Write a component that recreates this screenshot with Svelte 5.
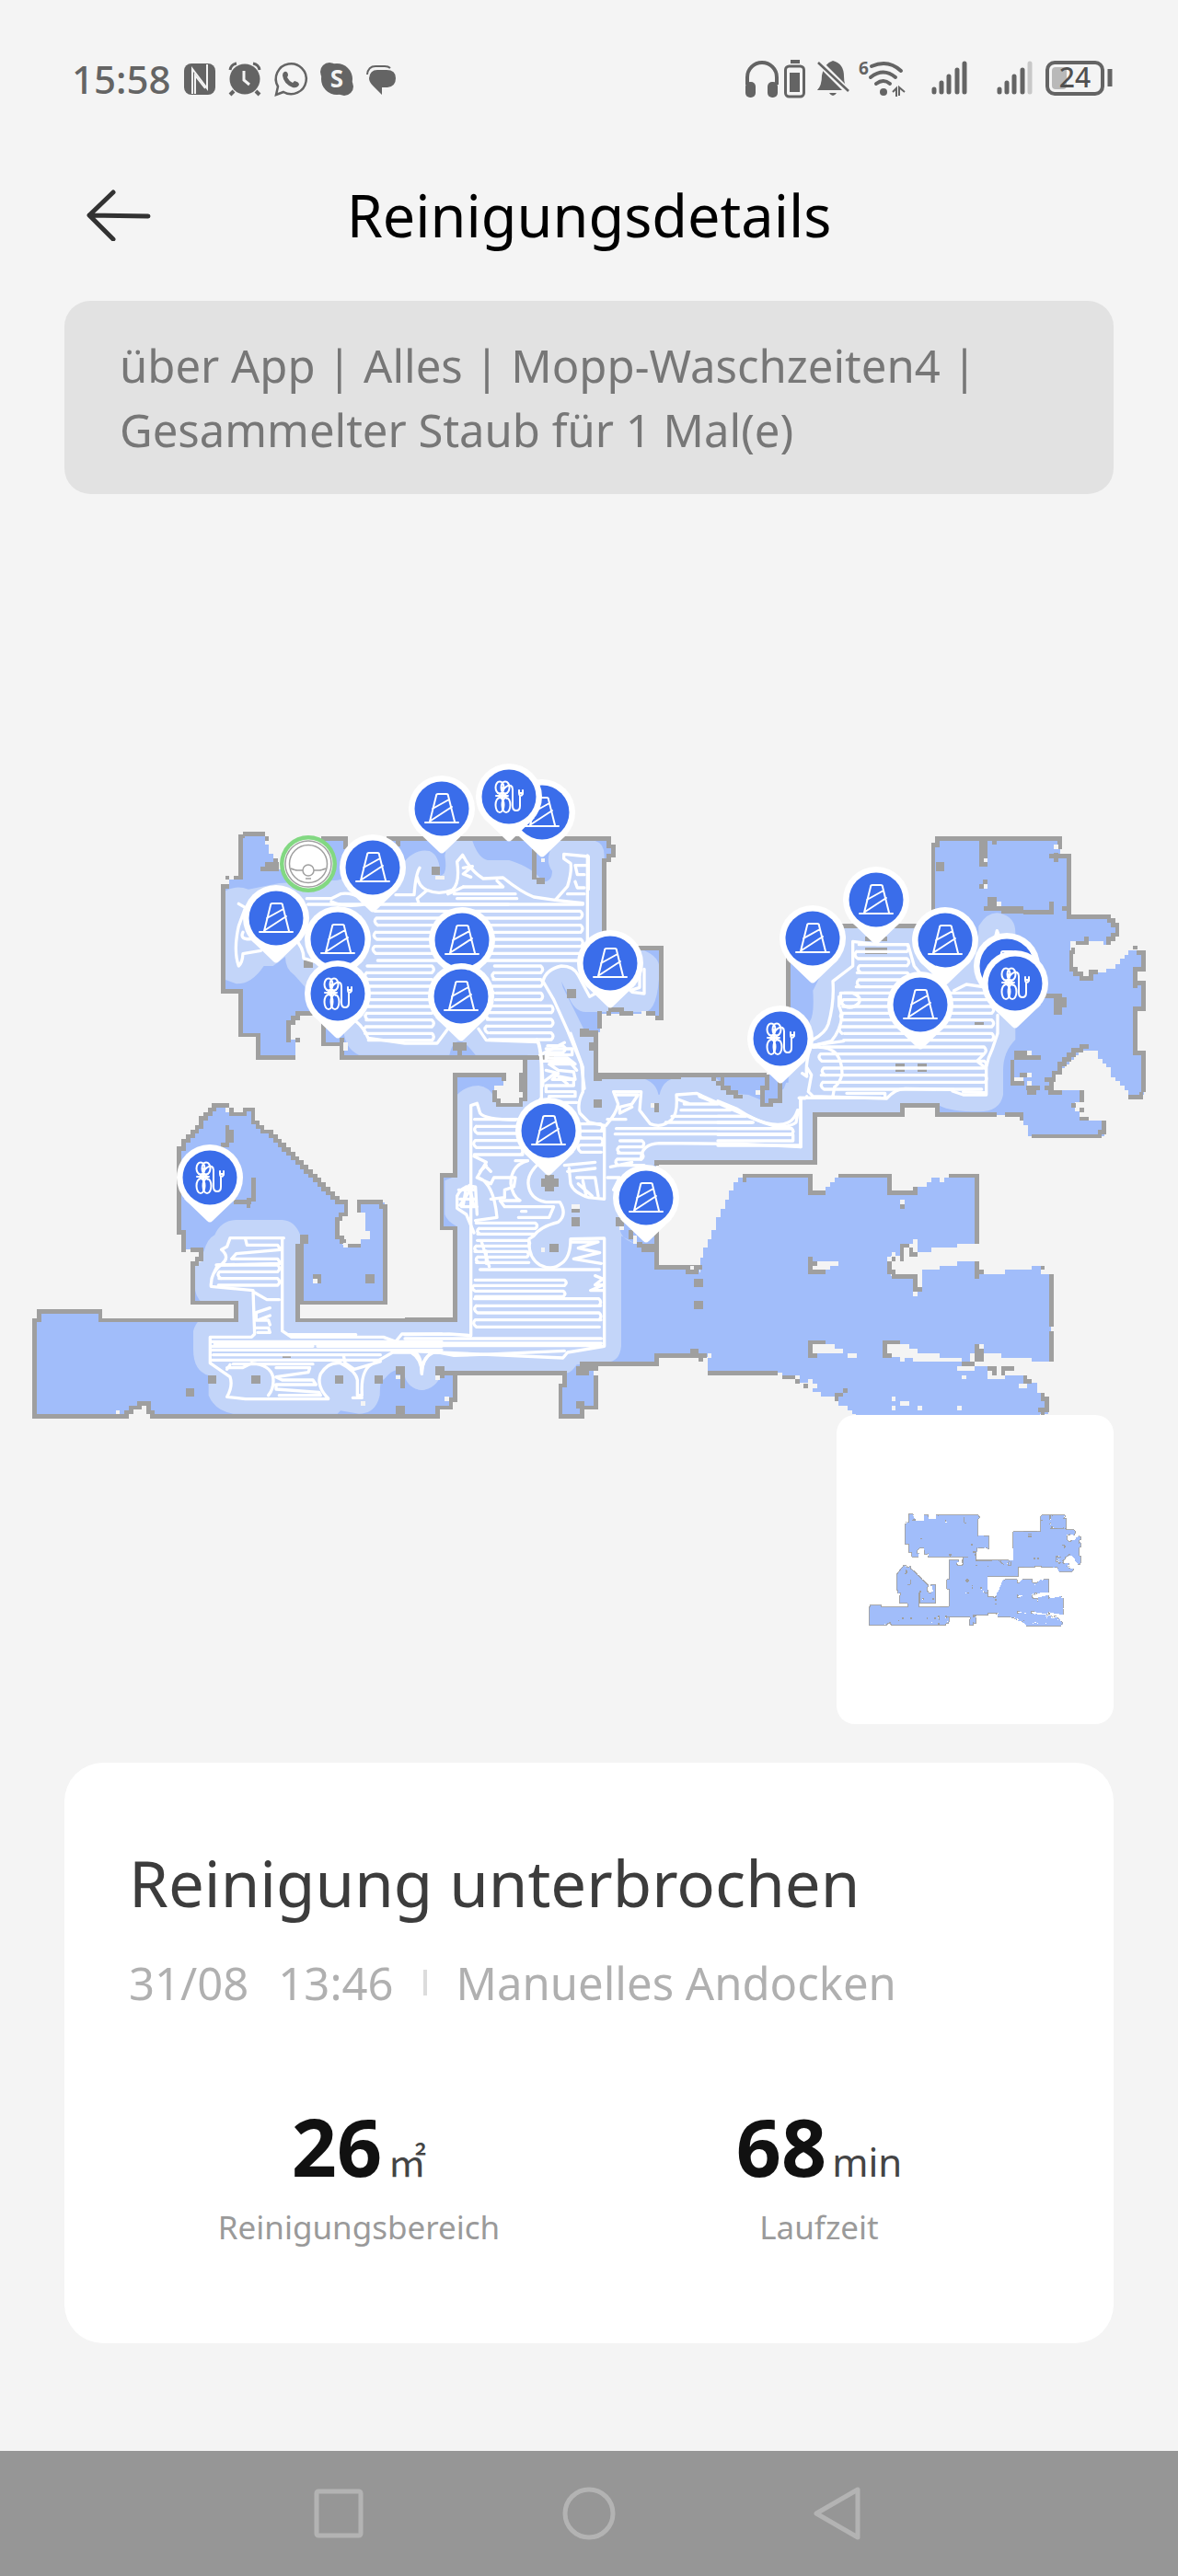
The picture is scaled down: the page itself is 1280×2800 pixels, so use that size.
<script lang="ts">
  type Pin = { x: number; y: number; kind: 'cone' | 'cable' };
  type Box = [number, number, number, number];
  type Room = {
    name: string;
    at: [number, number];
    floor: string;
    cleaned?: string;
    walls: string;
    blocks: Box[];
    gaps: Box[];
    trail?: string[];
  };

  // ----- rows of the cleaning path, joined alternately left and right -----
  function rows(left: number, right: number, top: number, bottom: number, step = 23) {
    let d = '';
    let side = false;
    for (let y = top; y <= bottom; y += step) {
      const l = left + ((y * 7) % 13);
      const r = right - ((y * 5) % 11);
      d += `M${l} ${y}H${r}`;
      if (y + step <= bottom) d += side ? `M${l} ${y}q-12 ${step / 2} 4 ${step}` : `q12 ${step / 2} 0 ${step}`;
      side = !side;
    }
    return d;
  }

  // every room is drawn three units to the pixel, from its own origin
  const rooms: Room[] = [
    {
      name: 'north-west',
      at: [220, 820],
      floor:
        'M125 402V267H138V260H204V295H215V325H230V345H245V375H390V275H467V340H600V275H1325V295H1340V335H1325V345H1310V632H1495V860H1475V845H1295V905H1282V1100H1052V988H455V945H395V845H310V860H295V875H280V930H303V988H182V915H125V772H68V430H88V408H125Z',
      cleaned:
        'M75 445Q110 425 150 440L250 420L440 410L650 360Q690 305 740 315Q775 330 775 395Q800 395 790 330L800 282H880Q900 340 930 345H1000Q1080 370 1110 415Q1140 415 1140 380Q1115 345 1140 300L1150 282H1280Q1310 290 1310 330V640H1440Q1490 660 1490 700Q1485 840 1440 840H1250Q1210 840 1190 780L1170 740L1175 760L1245 900H1275V1100H1060V980H890Q850 930 838 935Q815 935 805 980H510Q465 960 460 900L300 720Q270 700 270 660L230 690H200Q160 750 110 748L75 735Z',
      walls:
        'M88 430H68V772H125V915H182V988H303M75 402H88M103 402H125V267H138M132 260H203M210 267V281M190 373H250M205 358H250M238 340V370M388 275H467V310M600 275H1325V300H1340V330H1325V350M1310 340V640M638 282V300M1420 632H1495V860H1475M1317 845H1331M1322 832H1374M1360 845H1405M1447 845H1475M1295 838V895M1282 915V1052H1560M390 845H310V860H295V875H280V938M303 932H318M395 875V945H455M455 925V988H1145M1052 995V1045M1040 1038V1100M1082 310V408',
      blocks: [
        [747, 366, 28, 28], [1090, 402, 25, 20], [330, 672, 30, 24], [1188, 765, 30, 30], [816, 938, 45, 28],
        [831, 960, 14, 28], [1230, 895, 30, 15], [1245, 910, 45, 12], [1260, 938, 30, 28]
      ],
      gaps: [[760, 396, 28, 12], [1103, 338, 12, 12], [458, 938, 16, 28], [1331, 845, 14, 8], [1431, 838, 14, 14]],
      trail: [
        rows(560, 1235, 511, 680),
        rows(340, 1000, 489, 500),
        rows(530, 755, 690, 940, 22),
        rows(945, 1110, 690, 800, 22),
        rows(925, 1145, 820, 940, 22),
        'M680 489H1240M1255 330V690M820 455H1020M830 470H1025M850 432H980L960 412',
        'M118 487L140 500L118 560Q100 640 118 690Q130 680 132 650L190 640M132 580Q120 605 160 602M300 600Q330 630 330 665L380 680',
        'M340 470H420L450 455Q480 448 520 470M420 480Q460 500 520 490M630 458H690Q695 390 708 370M700 400Q705 430 730 442Q770 460 815 442Q840 420 830 350L848 328Q875 380 915 405L980 402Q1040 450 1080 465L1150 475L1190 430Q1205 380 1200 355L1178 340V325L1258 333V440',
        'M730 445L700 470L705 485M850 370L880 365L850 390L875 400M1150 475L1240 485M1215 362H1250M1215 362L1222 392H1245M1215 415L1222 435H1245M1190 455H1245M800 455L850 432',
        'M500 870Q525 890 540 925L660 942H765L800 895M900 895L925 932L1095 938Q1105 960 1110 1080',
        'M1110 740Q1120 700 1170 690Q1210 690 1225 720L1262 790L1290 775M1110 740L1145 800L1190 900L1235 1010L1245 1090M1440 700V780L1400 775M1425 710V760L1395 770',
        'M1125 950H1175Q1190 960 1175 972H1125V990H1190L1215 1010H1130L1160 1030L1210 1035L1215 1060L1160 1050L1190 1075M1115 1065L1150 1040'
      ]
    },
    {
      name: 'north-east',
      at: [780, 890],
      floor:
        'M703 85H715V64H1115V120H1145V320H1275V332H1288V347H1302V378H1288V392H1273V412H1258V400H1150V435H1145V490H1160V505H1180V520H1225V500H1265V488H1295V473H1310V455H1325V443H1338V430H1388V492H1360V535H1388V620H1360V765H1388V900H1338V885H1325V870H1310V855H1295V842H1280V810H1265V797H1253V783H1240V755H1175V770H1160V785H1145V800H1130V812H1115V828H1100V842H1088V885H1180V925H1165V955H1180V985H1260V1035H1010V1000H995V965H715V935H602V965H317V1120H-200V835H160V870H145V935H180V920H203V860H230V350H703Z',
      cleaned:
        'M410 355H645L760 480Q850 500 850 350Q880 300 920 308Q970 320 970 370V720Q930 760 930 820V900Q920 955 850 955Q760 955 722 935V965H317V1120H-200V900Q0 890 100 900L160 925L215 880L300 660Q315 640 310 560L325 530Z',
      walls:
        'M203 925V850M230 640V350H702V85H715V64H1115V98M1080 121H1145V320H1275V332H1288V347H1302V378H1288V392H1273V412M1102 110V140M1168 405H1202V385M1158 420V435H1152V490H1165V505H1185V520H1217V500H1238M1360 415V427M1365 436H1388V490H1360V552M1367 535H1388V620H1360V764H1388V892M1338 907H1380V890M1208 742H1185V755H1160V770H1145V785H1130V800H1115V828H1095V850H1065M1088 850V885M965 764H1008M965 778H1052M960 785V862H1000M985 835H1007M1005 878H1050M1008 892H1038M1065 878H1085V892H1122M1187 885V925M1152 935H1166M1178 978H1208M1258 985V1021H1245V1035H1023M990 985V965H935M908 965H715V935H602V965H317V1120M995 305H1088V270M410 350H640',
      blocks: [
        [852, 70, 27, 85], [893, 70, 16, 14], [710, 142, 28, 28], [865, 198, 14, 14], [852, 213, 14, 14],
        [878, 255, 30, 30], [867, 285, 58, 14], [923, 285, 72, 25], [1122, 285, 20, 14], [1065, 570, 57, 14],
        [1095, 583, 41, 31], [1095, 610, 27, 30], [837, 662, 30, 10], [580, 798, 28, 28], [650, 798, 30, 28],
        [480, 385, 72, 13], [480, 420, 72, 22], [1178, 942, 16, 14]
      ],
      gaps: [
        [867, 128, 12, 14], [867, 213, 12, 14], [908, 270, 16, 15], [1095, 85, 14, 14], [1008, 757, 14, 14],
        [1008, 828, 14, 14], [1008, 855, 14, 14], [967, 843, 28, 12], [1195, 920, 14, 40]
      ],
      trail: [
        rows(450, 620, 410, 548),
        rows(400, 895, 568, 730, 22),
        rows(335, 870, 744, 885),
        'M440 400L520 410H620L640 480L665 510M440 400V480L375 530Q380 600 360 670Q350 700 310 720M395 580V610L405 640Q400 690 370 725L310 740M770 560L810 540L880 550M905 385L910 365L918 385',
        'M310 745Q360 740 385 765Q405 790 405 830Q400 860 380 875L375 905M300 750Q285 800 290 840L275 830M290 810L305 835L295 890L310 905L550 912Q580 880 610 880L770 883M765 888L800 900H875V810Q880 780 895 750L912 700V640',
        'M420 895H545V908M360 910H530M400 568H440Q470 580 460 600Q430 630 400 600L400 570M865 770L845 790L870 810M300 740L410 725',
        'M270 910V1070M262 950L255 990Q230 1010 180 1000Q120 985 60 945L0 920M0 970H90M0 990H110M0 1010H240M0 1030H245V1050H0M0 1065H265',
        'M800 890L870 893M290 905Q290 915 265 910H370'
      ]
    },
    {
      name: 'hall',
      at: [440, 1120],
      floor:
        'M163 145H322V180H292V230H305V243H372V225H392V88H622V145H1340V430H820V772H960V1060H820V1088H575V1110H622V1230H578V1258H507V1165H520V1117H163V1205H150V1230H107V1258H0V943H163V645H120V473H163Z',
      cleaned:
        'M170 210Q200 180 240 180Q275 185 290 215L305 245H372L392 200V95H540L622 160L760 152Q830 165 828 230Q830 155 900 152H1010L1080 210L1170 240H1335V400Q1335 423 1320 423H820L700 640Q700 680 750 695L705 670V1030Q700 1080 660 1082L560 1090Q540 1120 525 1117H100Q90 1170 55 1173Q10 1170 0 1120V950H170V640Q135 620 130 600V490L170 473Z',
      walls:
        'M622 0V152M615 145H1180M392 95V225H378V243H305V228H292V195M380 138V180M322 165V145H163V473H120V645H163V943H0M820 440V430H1337V274H1440M820 650V772H970M915 787H957M570 1087H820V1060H985M622 1125V1230H578V1258H507V1158H520V1117H110M163 1117V1205H150V1230H107V1258H0M1035 145V187H1055V202H1078V216H1102M1000 158H1015M1015 173H1038M1180 145V188H1165V243H1192V230H1222V175',
      blocks: [
        [570, 0, 45, 22], [600, 38, 20, 28], [615, 138, 28, 27], [770, 697, 45, 26], [757, 690, 16, 18],
        [730, 652, 14, 28], [688, 610, 26, 28], [942, 810, 30, 28], [942, 882, 30, 28], [930, 1038, 27, 20],
        [957, 1060, 15, 20], [570, 1090, 60, 20], [558, 1095, 42, 30], [100, 1095, 28, 40], [558, 1208, 27, 25],
        [615, 225, 27, 27], [813, 238, 15, 28], [445, 483, 56, 27], [457, 470, 28, 55], [543, 582, 27, 12],
        [543, 610, 27, 28], [470, 695, 30, 28]
      ],
      gaps: [
        [743, 668, 13, 28], [700, 638, 14, 14], [930, 768, 13, 13], [987, 1053, 13, 14], [800, 238, 13, 14],
        [543, 567, 27, 14], [443, 708, 13, 14], [1143, 195, 14, 14], [100, 1125, 14, 14], [130, 1194, 14, 14],
        [615, 1110, 16, 14]
      ],
      trail: [
        rows(225, 385, 290, 405),
        rows(565, 645, 305, 410),
        rows(230, 430, 628, 665, 18),
        rows(225, 405, 685, 765, 18),
        rows(245, 640, 780, 800),
        rows(225, 520, 814, 870, 18),
        rows(225, 640, 875, 985),
        rows(685, 1265, 320, 350, 18),
        rows(690, 780, 360, 440, 20),
        'M215 245V995L145 990L0 992M215 245L235 238L245 270Q260 290 360 292M650 310V550L600 545Q550 530 540 500L535 450M650 680V1030L530 1050L515 1068L0 1045M640 1005H0M640 1020H0M640 1028H0',
        'M400 425Q345 440 345 500Q350 540 375 555H310L325 575H485L470 610H370M430 440Q400 470 402 500Q405 550 460 560H505Q530 600 500 625Q440 640 420 670L405 680Q400 740 440 765Q480 785 510 760Q540 740 540 680L650 678',
        'M225 410L265 430L235 480L280 500L290 480H360L355 510L325 520V545L280 550M265 440L245 460L260 440L280 460M240 480Q290 500 300 610L230 620M170 540Q190 500 230 510L235 600M170 540V580L200 600L225 660M175 520H230M180 550H230M185 575H235M200 510L190 570M220 510L180 570M210 505L225 575',
        'M400 425H360M520 440L620 430M530 460L620 450M560 480H620L630 540M565 500L610 540M580 490L590 535M250 690L275 770M265 720V760M380 590H395M545 690H630L565 710L635 725L550 745L640 760',
        'M620 800L645 810L620 830H645L605 848H645M430 30Q445 60 445 140V220L430 240M440 80L520 40M450 100H540M540 10L580 120V200Q560 240 570 270L600 300L650 310',
        'M460 60H545V80H460V100L530 95L560 130M460 130L500 140L480 160H550V180H460V200H555V215H470V235H560',
        'M655 310Q690 270 695 240L680 200H770L765 260L800 305Q840 320 870 290Q890 270 885 210L950 205L1060 255L1130 285Q1210 320 1250 300Q1270 290 1280 260M1290 220V380L1100 370L830 368Q770 370 770 420M900 260H1060M870 280H1110M850 300H1135M910 240H1020L960 215M890 225L930 240',
        'M690 210H760L740 240L700 250V270L740 250M660 290H720M670 445L740 430M660 480H700L680 520H700M1285 220H1440',
        'M0 1048H30Q55 1060 55 1120Q55 1060 100 1048L160 1060L300 1055L520 1045'
      ]
    },
    {
      name: 'south-east',
      at: [700, 1240],
      floor:
        'M183 430V380H192V348H207V320H220V292H234V250H249V222H264V192H277V163H291V135H306V120H325V114H541V170H591V150H606V135H620V120H633V114H799V170H884V150H921V135H936V120H963V134H978V120H993V114H1085V335H1020V348H936V362H890V348H877V335H840V375H805V440H890V490H905V420H963V407H1020V393H1085V435H1176V420H1263V408H1293V435H1327V720H1263V708H1163V693H1062V720H1035V708H963V693H890V678H863V663H785V705H833V708H877V720H1035V735H1120V765H1240V790H1280V822H1300V835H1318V890H1290V918H690V890H678V878H663V863H633V833H577V820H549V805H533V790H507V775H450V757H207V705H100V430Z',
      walls:
        'M327 134V114H541V170H591M633 114H799V170H884V150M993 114H1085V335M840 392V342H863M870 348V370H890M812 378V392M799 393V427H818M807 442H884V484H905M541 378V427H591M541 400H563M1085 393V449M1085 427H1107M1327 435V605M1327 621V720M591 657H541V700H563M833 657H785V700H807M1035 727H1077M1120 742H1142V764M1206 742H1170V764M1242 765V784H1263M1299 822V842H1313V878H1285M1299 878V895M207 757H435M450 771H499V791M0 727H40V700H205M40 290V414H190M135 427H177M690 916H1290',
      blocks: [
        [162, 450, 30, 27], [162, 522, 30, 27], [1077, 663, 15, 20], [1077, 678, 30, 42], [1293, 408, 12, 12],
        [519, 792, 15, 14], [621, 822, 27, 12], [621, 834, 12, 14], [648, 807, 15, 15], [834, 208, 15, 14]
      ],
      gaps: [
        [549, 407, 57, 13], [563, 393, 70, 14], [549, 663, 72, 15], [549, 678, 99, 15], [663, 693, 30, 14],
        [533, 778, 16, 14], [535, 792, 29, 14], [1020, 735, 57, 14], [1035, 765, 15, 12], [1120, 765, 55, 12],
        [1150, 735, 14, 30], [1221, 792, 27, 14], [807, 835, 12, 14], [834, 849, 30, 14], [807, 865, 12, 14],
        [891, 865, 15, 14], [1020, 865, 15, 14], [834, 193, 15, 14], [890, 465, 15, 12], [877, 492, 14, 15],
        [207, 693, 12, 14], [877, 321, 14, 27], [807, 363, 12, 14], [793, 378, 14, 14], [834, 708, 15, 12],
        [150, 407, 12, 12], [1092, 663, 15, 15], [492, 764, 15, 12]
      ]
    },
    {
      name: 'west',
      at: [20, 1180],
      floor:
        'M52 1078V765H67V736H267V765H709V708H568V575H596V535H538V478H524V205H538V180H553V165H568V150H582V135H596V107H610V93H625V78H637V64H680V78H694V93H738V78H765V120H780V135H795V150H823V165H838V180H852V193H866V208H881V222H895V237H909V251H924V265H938V280H952V294H967V308H981V323H995V337H1010V351H1024V366H1040V380H1068V420H1055V435H1040V495H1055V520H1115V500H1145V473H1130V415H1110V380H1195V708H911V765H1380V1050H1368V1078H437V1065H425V1037H395V1050H367V1065H353V1078Z',
      cleaned:
        'M605 540Q615 500 640 487Q660 440 710 438H860Q900 440 918 485V765H1380V940Q1360 990 1315 993Q1270 985 1260 950Q1240 900 1190 960Q1180 940 1178 1010Q1165 1070 1110 1070L1050 1060L1040 1070H700Q640 1060 620 1010V945Q570 930 570 860V800Q575 780 590 765H709V708H600Q575 690 575 650V580Z',
      walls:
        'M360 1078H52V765H67V736H267V765H709V708H568V580H582V565H596V535H561M538 543V478H524V205H538V180H553V165H568V150H582V135H596V107H610V93H625V78H637V64H687M694 72V93H738V78H765V120H780V135H795V150H823V165H838V180H852V193H866V208H881V222H895V237H909V251H924V265H938V280H952V294H967V308H981V323H995V337H1010V351H1024V366H1040V380H1068V420H1050V435H1040V495H1055V508H1068M1074 522H1115M1110 414V380H1182V394H1195V708H911M911 515V765H1380M1380 1050H1368V1078H437V1065H425V1037H395V1050H367V1065H345M766 300V372H750V400M703 379H758',
      blocks: [
        [675, 130, 13, 14], [675, 143, 27, 42], [660, 185, 28, 15], [918, 487, 27, 28], [903, 515, 27, 193],
        [960, 615, 27, 30], [1130, 615, 31, 30], [618, 945, 27, 27], [759, 945, 30, 27], [546, 987, 27, 27],
        [1032, 945, 27, 27], [1161, 945, 27, 27], [1230, 915, 30, 28], [1245, 943, 15, 43], [1360, 915, 20, 28],
        [1230, 1044, 30, 30], [862, 878, 26, 10]
      ],
      gaps: [
        [960, 630, 14, 15], [1230, 945, 15, 13], [1360, 945, 14, 13], [318, 1059, 12, 12], [1116, 1030, 15, 14],
        [675, 72, 12, 14], [1060, 514, 14, 14]
      ],
      trail: [
        rows(645, 855, 585, 660, 22),
        'M860 500V800L890 820H1190L1230 835L1250 810H1380M865 497H690L680 525L662 535Q690 560 665 580Q625 610 628 655L765 668L770 810L760 820H625V905L690 950Q700 980 680 1015L740 1022H1010',
        'M740 500L745 520H845L855 535L710 548L695 565H845L855 580L650 585L640 605M770 675L810 698H850M775 740L820 725M775 745V765H815L820 780M780 765L820 750M775 790H815L820 805H780',
        'M630 835H1380M630 850H960M975 850H1380M630 862H1380M635 878H1180M630 895H1180M640 842H1380M880 812H1100M700 908H960',
        'M680 920H730L760 905Q820 910 830 950Q835 985 815 1010M840 920H950L945 935L840 950L860 960H960L970 975H840V990L980 1000L985 1010H850M690 910L680 925',
        'M1010 1020Q970 980 985 940Q1010 900 1050 905Q1100 930 1105 960V1010H1120Q1115 930 1150 910L1220 870H1280Q1315 890 1315 940Q1315 890 1350 870H1380M1060 880L1065 905L1095 925L1180 900M1090 1018H1120'
      ]
    }
  ];

  const pins: Pin[] = [
    { x: 480, y: 879, kind: 'cone' },
    { x: 589, y: 883, kind: 'cone' },
    { x: 553, y: 866, kind: 'cable' },
    { x: 405, y: 943, kind: 'cone' },
    { x: 300, y: 998, kind: 'cone' },
    { x: 367, y: 1021, kind: 'cone' },
    { x: 367, y: 1080, kind: 'cable' },
    { x: 502, y: 1022, kind: 'cone' },
    { x: 501, y: 1083, kind: 'cone' },
    { x: 663, y: 1047, kind: 'cone' },
    { x: 883, y: 1020, kind: 'cone' },
    { x: 952, y: 978, kind: 'cone' },
    { x: 1027, y: 1022, kind: 'cone' },
    { x: 1094, y: 1050, kind: 'cone' },
    { x: 1103, y: 1069, kind: 'cable' },
    { x: 1000, y: 1092, kind: 'cone' },
    { x: 848, y: 1129, kind: 'cable' },
    { x: 596, y: 1229, kind: 'cone' },
    { x: 702, y: 1302, kind: 'cone' },
    { x: 228, y: 1280, kind: 'cable' }
  ];

  const stats = [
    { value: '26', unit: '㎡', label: 'Reinigungsbereich' },
    { value: '68', unit: 'min', label: 'Laufzeit' }
  ];
</script>

{#snippet plan(detailed: boolean)}
  {#each rooms as room}
    <g transform="translate({room.at[0]} {room.at[1]}) scale(0.33333)">
      <path class="floor" d={room.floor} />
    </g>
  {/each}
  {#if detailed}
    {#each rooms as room}
      {#if room.cleaned}
        <g transform="translate({room.at[0]} {room.at[1]}) scale(0.33333)">
          <clipPath id="clip-{room.name}"><path d={room.floor} /></clipPath>
          <path class="cleaned" d={room.cleaned} clip-path="url(#clip-{room.name})" />
        </g>
      {/if}
    {/each}
  {/if}
  {#each rooms as room}
    <g transform="translate({room.at[0]} {room.at[1]}) scale(0.33333)">
      <path class="wall" d={room.walls} />
      {#each room.blocks as [x, y, w, h]}
        <rect class="block" {x} {y} width={w} height={h} />
      {/each}
      {#each room.gaps as [x, y, w, h]}
        <rect class="gap" {x} {y} width={w} height={h} />
      {/each}
    </g>
  {/each}
  {#if detailed}
    {#each rooms as room}
      {#if room.trail}
        <g transform="translate({room.at[0]} {room.at[1]}) scale(0.33333)">
          {#each room.trail as d}
            <path class="trail" {d} />
          {/each}
        </g>
      {/if}
    {/each}
  {/if}
{/snippet}

<div class="screen">
  <div class="status">
    <div class="side">
      <span class="clock">15:58</span>
      <svg width="34" height="34" viewBox="0 0 34 34" aria-hidden="true">
        <rect width="34" height="34" rx="8" fill="#646464" />
        <path d="M9 33V6L25 27V1" fill="none" stroke="#f4f4f4" stroke-width="2" />
        <path d="M12 33V13L23 27" fill="none" stroke="#f4f4f4" stroke-width="2" />
      </svg>
      <svg width="36" height="36" viewBox="0 0 36 36" aria-hidden="true">
        <circle cx="18" cy="18" r="16.500" fill="#646464" />
        <path d="M2 8Q3 2 9 1M34 8Q33 2 27 1" fill="none" stroke="#646464" stroke-width="3" />
        <path d="M6 31L2 35M30 31L34 35" stroke="#646464" stroke-width="4" />
        <path d="M17 9V19L23 24" fill="none" stroke="#f4f4f4" stroke-width="3" />
      </svg>
      <svg width="36" height="36" viewBox="0 0 36 36" aria-hidden="true">
        <path d="M2 35L4 26A16.500 16.500 0 1 1 10 32Z" fill="none" stroke="#646464" stroke-width="2.500" />
        <path
          d="M11 10Q14 9 15 13Q15 15 14 16Q16 20 20 22L22 20Q27 21 27 24Q25 28 20 27Q10 23 9 14Q9 11 11 10Z"
          fill="#646464"
        />
      </svg>
      <svg width="36" height="36" viewBox="0 0 36 36" aria-hidden="true">
        <circle cx="18" cy="18" r="17" fill="#646464" />
        <circle cx="10" cy="10" r="10" fill="#646464" />
        <circle cx="26" cy="26" r="10" fill="#646464" />
        <text class="skype" x="18" y="27" text-anchor="middle">S</text>
      </svg>
      <svg width="32" height="36" viewBox="0 0 32 36" aria-hidden="true">
        <path d="M1 13Q2 4 10 4H20Q24 4 26 6" fill="none" stroke="#646464" stroke-width="2" />
        <path d="M12 8H22Q32 8 32 17Q32 26 23 27H17V35L7 25Q3 21 3 17Q4 8 12 8Z" fill="#646464" />
      </svg>
    </div>

    <div class="side">
      <svg width="414" height="42" viewBox="0 0 414 42" aria-hidden="true">
        <path d="M3 28V20A16 16 0 0 1 35 20V28" transform="translate(0 -1)" fill="none" stroke="#646464" stroke-width="4" />
        <rect x="1" y="24" width="11" height="17" rx="5" fill="#646464" />
        <rect x="25" y="24" width="11" height="17" rx="5" fill="#646464" />
        <rect x="50" y="0" width="10" height="4" fill="#646464" />
        <rect x="44.500" y="7" width="20" height="33" rx="4" fill="none" stroke="#646464" stroke-width="3" />
        <rect x="49" y="14" width="11" height="21" fill="#646464" />
        <path d="M79 33Q84 28 84 17Q86 4 96 1Q108 4 108 18Q108 28 113 33Z" fill="#646464" />
        <path d="M92 36H100Q96 42 92 36Z" fill="#646464" />
        <path d="M78 0L114 36" stroke="#f4f4f4" stroke-width="7" />
        <path d="M80 3L113 34" stroke="#646464" stroke-width="2.500" />
        <text class="wifi-gen" x="124" y="16">6</text>
        <g fill="none" stroke="#646464" stroke-width="4" stroke-linecap="round">
          <path d="M138 7Q156 -1 170 12" />
          <path d="M137 19Q151 8 164 19" />
          <path d="M143 26Q151 20 158 26" />
        </g>
        <circle cx="151" cy="35" r="4" fill="#646464" />
        <path d="M161 35L165 31V40M168 39V30L174 35" fill="none" stroke="#646464" stroke-width="2" />
        <g stroke="#646464" stroke-width="5" stroke-linecap="round">
          <path d="M206 32V35M214 25V35M222 18V35M231 11V35M239 4V35" />
          <path d="M277 32V35M285 25V35M293 18V35M302 11V35" />
          <path d="M310 4V35" stroke="#c8c8c8" />
        </g>
        <rect x="329" y="3" width="60" height="34" rx="8" fill="none" stroke="#646464" stroke-width="4" />
        <rect x="334" y="8" width="16" height="24" rx="4" fill="#b9b9b9" />
        <path d="M397 10V29" stroke="#646464" stroke-width="5" />
        <text class="charge" x="359" y="30" text-anchor="middle">24</text>
      </svg>
    </div>
  </div>

  <header>
    <button class="back" aria-label="Zurück">
      <svg width="70" height="56" viewBox="0 0 70 56" aria-hidden="true">
        <path
          d="M67 29L3 28M29 3L3 28L29 54"
          fill="none"
          stroke="#323232"
          stroke-width="5"
          stroke-linecap="round"
          stroke-linejoin="round"
        />
      </svg>
    </button>
    <h1>Reinigungsdetails</h1>
  </header>

  <p class="summary">über App | Alles | Mopp-Waschzeiten4 |<br />Gesammelter Staub für 1 Mal(e)</p>

  <section class="map">
    <svg class="canvas" viewBox="0 537 1280 1379" aria-label="Karte">
      {@render plan(true)}

      <g transform="translate(335 939)">
        <circle r="31" fill="#82d882" />
        <circle r="26.500" fill="#fff" />
        <g fill="none" stroke="#a0a0a0" stroke-width="1.500">
          <circle r="25" />
          <circle r="20.500" />
          <path d="M-19 5Q-14 7 -12 7H-6M6 7H12Q14 7 19 5M-3 16H3" />
          <circle cy="7" r="6" />
        </g>
      </g>

      {#each pins as pin}
        <g transform="translate({pin.x} {pin.y})">
          <path d="M-28 23L-3 47Q0 50 3 47L28 23Z" fill="#fff" />
          <circle r="36" fill="#fff" />
          <circle r="29.500" fill="#3a6dea" />
          <g class="glyph">
            {#if pin.kind === 'cone'}
              <path d="M-18 15H18M-13 14L-6 -14Q-6 -16 -4 -16H5Q7 -16 7 -14L14 14M-10 0L8 -10M-12 13L11 -2" />
            {:else}
              <ellipse cx="-10" cy="-10" rx="4.500" ry="6.500" />
              <ellipse cx="-4" cy="-10" rx="4.500" ry="6.500" />
              <ellipse cx="-10" cy="9" rx="4.500" ry="8" />
              <ellipse cx="-3" cy="9" rx="4.500" ry="8" />
              <path d="M-14 -1H-1M-12 -4L-2 2M-2 -4L-12 2M-7 -10V14" />
              <path d="M-6 -8Q-2 -13 2 -12Q4 -11 4 -8V10Q4 15 8 15Q12 15 12 10V-1M11 -4H15V-3Q14 -1 12 -1Q11 -2 11 -4M11 -7V-4M15 -7V-4" />
            {/if}
          </g>
        </g>
      {/each}
    </svg>

    <div class="overview">
      <svg viewBox="-147 343 1576 1759" aria-label="Kartenübersicht">
        {@render plan(false)}
      </svg>
    </div>
  </section>

  <section class="card">
    <h2>Reinigung unterbrochen</h2>
    <p class="meta">
      <span>31/08</span>
      <span>13:46</span>
      <i></i>
      <span>Manuelles Andocken</span>
    </p>
    <div class="stats">
      {#each stats as stat}
        <div class="stat">
          <div class="figure"><strong>{stat.value}</strong><span>{stat.unit}</span></div>
          <div class="label">{stat.label}</div>
        </div>
      {/each}
    </div>
  </section>

  <nav>
    <button aria-label="Letzte Apps">
      <svg width="60" height="60" viewBox="0 0 60 60"><rect x="6" y="6" width="48" height="48" rx="2" /></svg>
    </button>
    <button aria-label="Startbildschirm">
      <svg width="60" height="60" viewBox="0 0 60 60"><circle cx="30" cy="30" r="26" /></svg>
    </button>
    <button aria-label="Zurück">
      <svg width="60" height="60" viewBox="0 0 60 60"><path d="M50 4V56L5 30Z" /></svg>
    </button>
  </nav>
</div>

<style>
  :global(body) {
    background: #f4f4f4;
  }

  .screen {
    display: flex;
    flex-direction: column;
    min-height: 100vh;
    font-family: "Noto Sans", "Noto Sans CJK SC", sans-serif;
  }

  h1, h2, p {
    margin: 0;
    font-weight: 400;
  }

  button {
    display: flex;
    padding: 0;
    border: none;
    background: none;
    cursor: pointer;
  }

  .status {
    display: flex;
    justify-content: space-between;
    align-items: center;
    height: 172px;
    padding: 0 57px 0 78px;
    box-sizing: border-box;
  }

  .side {
    display: flex;
    align-items: center;
    gap: 14px;
  }

  .side svg {
    overflow: visible;
  }

  .clock {
    font-size: 42px;
    font-weight: 500;
    line-height: 60px;
    color: #646464;
  }

  .skype {
    font-size: 26px;
    font-weight: 700;
    fill: #f4f4f4;
  }

  .wifi-gen {
    font-size: 19px;
    font-weight: 700;
    fill: #646464;
  }

  .charge {
    font-size: 30px;
    font-weight: 500;
    fill: #505050;
  }

  header {
    display: grid;
    grid-template-columns: 70px 1fr 70px;
    align-items: center;
    height: 124px;
    margin: 0 94px 31px;
  }

  h1 {
    font-size: 63px;
    line-height: 80px;
    text-align: center;
    color: #000;
  }

  .summary {
    margin: 0 70px;
    padding: 35px 60px;
    border-radius: 28px;
    background: #e2e2e2;
    color: #777;
    font-size: 49px;
    line-height: 70px;
  }

  .map {
    position: relative;
  }

  .canvas {
    display: block;
    width: 100%;
    height: auto;
  }

  .floor {
    fill: #a1bdfa;
    shape-rendering: crispEdges;
  }

  .cleaned {
    fill: #c3d5f9;
  }

  .wall {
    fill: none;
    stroke: #9f9f9f;
    stroke-width: 14;
    shape-rendering: crispEdges;
  }

  .block {
    fill: #9f9f9f;
    shape-rendering: crispEdges;
  }

  .gap {
    fill: #f4f4f4;
    shape-rendering: crispEdges;
  }

  .trail {
    fill: none;
    stroke: #fff;
    stroke-width: 10;
    stroke-linecap: round;
    stroke-linejoin: round;
  }

  .glyph {
    fill: none;
    stroke: #fff;
    stroke-width: 2;
    stroke-linecap: round;
  }

  /* small map in the corner */
  .overview {
    position: absolute;
    right: 70px;
    bottom: 42px;
    width: 301px;
    height: 336px;
    border-radius: 20px;
    background: #fff;
  }

  .overview svg {
    display: block;
    width: 100%;
    height: 100%;
  }

  .overview .gap {
    fill: #fff;
  }

  .card {
    margin: 0 70px;
    padding: 80px 70px 101px;
    border-radius: 42px;
    background: #fff;
  }

  h2 {
    font-size: 69px;
    line-height: 100px;
    color: #3c3c3c;
  }

  .meta {
    display: flex;
    align-items: center;
    gap: 32px;
    margin-top: 24px;
    font-size: 49px;
    line-height: 70px;
    color: #b0b0b0;
  }

  .meta i {
    width: 4px;
    height: 28px;
    background: #dcdcdc;
  }

  .stats {
    display: grid;
    grid-template-columns: 1fr 1fr;
    margin-top: 98px;
  }

  .stat {
    text-align: center;
  }

  .figure {
    line-height: 90px;
    color: #444;
    font-size: 42px;
  }

  .figure strong {
    margin-right: 6px;
    font-size: 86px;
    font-weight: 700;
    color: #111;
  }

  .label {
    font-size: 35px;
    line-height: 50px;
    margin-top: 1px;
    color: #9a9a9a;
  }

  nav {
    display: flex;
    justify-content: center;
    align-items: center;
    gap: 212px;
    height: 136px;
    margin-top: auto;
    background: #969696;
  }

  nav svg {
    fill: none;
    stroke: #b3b3b3;
    stroke-width: 5;
    stroke-linejoin: round;
  }
</style>
